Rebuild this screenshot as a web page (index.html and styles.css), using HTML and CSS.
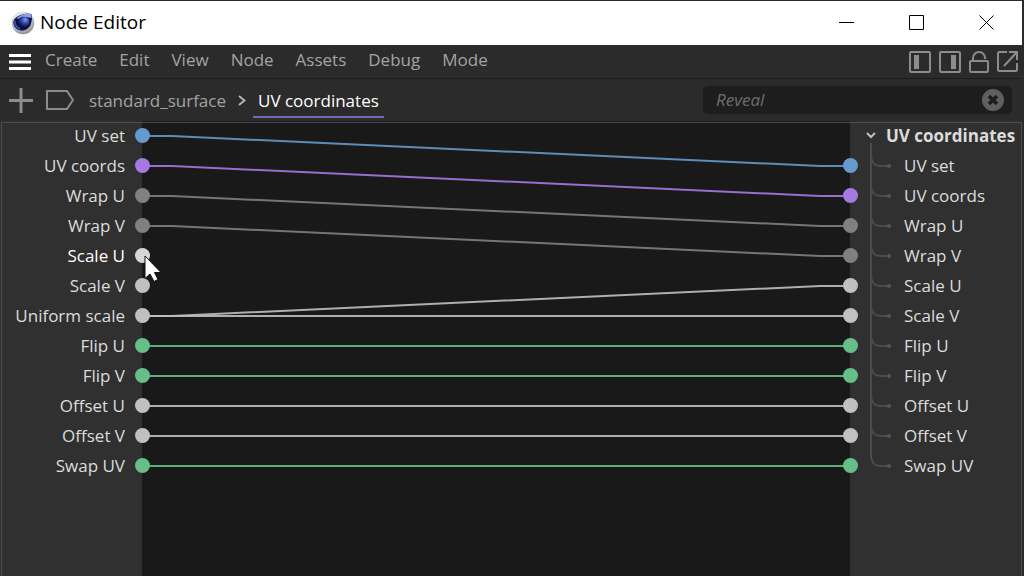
FILE: index.html
```html
<!DOCTYPE html>
<html lang="en">
<head>
<meta charset="utf-8">
<title>Node Editor</title>
<link rel="stylesheet" href="styles.css">
</head>
<body>
<div class="window">
  <header class="titlebar">
    <svg class="app-icon" width="24" height="24" viewBox="0 0 24 24" aria-hidden="true">
      <defs>
        <radialGradient id="rim" cx=".4" cy=".25" r=".8"><stop offset="0" stop-color="#f4f4f6"/><stop offset=".6" stop-color="#c6c6ca"/><stop offset="1" stop-color="#85858b"/></radialGradient>
        <radialGradient id="ball" cx=".65" cy=".3" r=".7"><stop offset="0" stop-color="#7f9aee"/><stop offset=".5" stop-color="#2c429e"/><stop offset="1" stop-color="#070a38"/></radialGradient>
      </defs>
      <circle cx="12" cy="12" r="11.300" fill="url(#rim)"/>
      <path d="M20.500 3C14 2 5 4 2.500 10c-1 4 2 8.500 7 9.500 5 .5 9.500-2.500 10.500-7 .8-3 1.500-6 .5-9.500z" fill="#0b1046"/>
      <path d="M20.500 3c-6-.8-11 .5-15 4.500l2 .5c3-2 7-2.500 10-1.500l3 .5z" fill="#8f9fe0"/>
      <ellipse cx="12.500" cy="11" rx="6" ry="5.500" fill="url(#ball)"/>
      <path d="M4 9.500c-.5 4 1.500 7 5 8.500" fill="none" stroke="#4058b8" stroke-width="1.500"/>
    </svg>
    <h1 class="title">Node Editor</h1>
    <div class="window-buttons">
      <button class="window-button" aria-label="Minimize"><svg width="16" height="16" viewBox="0 0 16 16"><path d="M0 7.500h15"/></svg></button>
      <button class="window-button" aria-label="Maximize"><svg width="16" height="16" viewBox="0 0 16 16"><path d="M.5 .5h14v14H.5z"/></svg></button>
      <button class="window-button" aria-label="Close"><svg width="16" height="16" viewBox="0 0 16 16"><path d="M.5 .5l14 14M14.500 .5l-14 14"/></svg></button>
    </div>
  </header>

  <nav class="menubar" aria-label="Main menu">
    <button class="icon-button menu-toggle" aria-label="Menu"><svg width="24" height="18" viewBox="0 0 24 18"><path d="M1 2.500h22M1 9h22M1 15.500h22" stroke="#fff" stroke-width="3"/></svg></button>
    <button class="menu">Create</button>
    <button class="menu">Edit</button>
    <button class="menu">View</button>
    <button class="menu">Node</button>
    <button class="menu">Assets</button>
    <button class="menu">Debug</button>
    <button class="menu">Mode</button>
    <div class="view-tools">
      <button class="icon-button" aria-label="Left panel"><svg width="22" height="22" viewBox="0 0 22 22"><rect x="1" y="1" width="20" height="20" rx="1"/><path class="solid" d="M5 4h5v14H5z"/></svg></button>
      <button class="icon-button" aria-label="Right panel"><svg width="22" height="22" viewBox="0 0 22 22"><rect x="1" y="1" width="20" height="20" rx="1"/><path class="solid" d="M12 4h5v14h-5z"/></svg></button>
      <button class="icon-button" aria-label="Lock"><svg width="20" height="22" viewBox="0 0 20 22"><rect x="1" y="10" width="18" height="11" rx="1"/><path d="M4 10V7a6 6 0 0 1 12 0v1"/></svg></button>
      <button class="icon-button" aria-label="Open in new window"><svg width="22" height="22" viewBox="0 0 22 22"><path d="M10 1H2L1 2v17l1 1h17l1-1v-7M7 15L20 1M12 1h8v8"/></svg></button>
    </div>
  </nav>

  <div class="toolbar">
    <button class="icon-button" aria-label="Add"><svg width="24" height="26" viewBox="0 0 24 26"><path d="M0 13.500h24M12 1v25" stroke-width="3"/></svg></button>
    <button class="icon-button" aria-label="Tag"><svg width="28" height="20" viewBox="0 0 28 20"><path d="M1 1h20l6 9-6 9H1z"/></svg></button>
    <nav class="breadcrumb" aria-label="Breadcrumb">
      <a class="crumb" href="#surface">standard_surface</a>
      <svg class="crumb-arrow" width="8" height="12" viewBox="0 0 8 12" aria-hidden="true"><path d="M1 2l5.500 4.500L1 11"/></svg>
      <a class="crumb current" href="#coordinates" aria-current="page">UV coordinates</a>
    </nav>
    <div class="search">
      <input class="search-input" type="text" placeholder="Reveal" aria-label="Reveal">
      <button class="icon-button" aria-label="Clear"><svg width="22" height="22" viewBox="0 0 22 22"><circle cx="11" cy="11" r="11" fill="#606060" stroke="none"/><path d="M7 7l8 8M15 7l-8 8" stroke="#1d1d1d" stroke-width="3.500"/></svg></button>
    </div>
  </div>

  <main class="graph">
    <ul class="ports inputs">
      <li class="port blue">UV set</li>
      <li class="port purple">UV coords</li>
      <li class="port gray">Wrap U</li>
      <li class="port gray">Wrap V</li>
      <li class="port light active">Scale U
        <svg class="cursor" width="18" height="28" viewBox="0 0 18 28" aria-hidden="true"><path d="M1 1v22.500l5-4.500 4 7.500 4-2-3.500-7H17z" fill="#fff" stroke="#111" stroke-width="1"/></svg>
      </li>
      <li class="port light">Scale V</li>
      <li class="port light">Uniform scale</li>
      <li class="port green">Flip U</li>
      <li class="port green">Flip V</li>
      <li class="port light">Offset U</li>
      <li class="port light">Offset V</li>
      <li class="port green">Swap UV</li>
    </ul>

    <svg class="wires" viewBox="0 0 708 360" preserveAspectRatio="none" role="img" aria-label="Connections">
      <path class="blue" d="M0 15H30L678 45H708"/>
      <path class="purple" d="M0 45H30L678 75H708"/>
      <path class="gray" d="M0 75H30L678 105H708"/>
      <path class="gray" d="M0 105H30L678 135H708"/>
      <path class="light" d="M0 195H30L678 165H708"/>
      <path class="light" d="M0 195H708"/>
      <path class="green" d="M0 225H708"/>
      <path class="green" d="M0 255H708"/>
      <path class="light" d="M0 285H708"/>
      <path class="light" d="M0 315H708"/>
      <path class="green" d="M0 345H708"/>
    </svg>

    <section class="outputs">
      <svg width="0" height="0" class="symbols" aria-hidden="true">
        <symbol id="branch" viewBox="0 0 22 30"><path d="M1 0v5q1 10 9 10h9"/><circle cx="19" cy="15" r="2"/></symbol>
      </svg>
      <button class="group"><svg width="10" height="8" viewBox="0 0 10 8" aria-hidden="true"><path d="M1 1l4 4 4-4"/></svg>UV coordinates</button>
      <ul class="ports tree">
        <li class="port blue"><svg class="branch"><use href="#branch"/></svg>UV set</li>
        <li class="port purple"><svg class="branch"><use href="#branch"/></svg>UV coords</li>
        <li class="port gray"><svg class="branch"><use href="#branch"/></svg>Wrap U</li>
        <li class="port gray"><svg class="branch"><use href="#branch"/></svg>Wrap V</li>
        <li class="port light"><svg class="branch"><use href="#branch"/></svg>Scale U</li>
        <li class="port light"><svg class="branch"><use href="#branch"/></svg>Scale V</li>
        <li class="port green"><svg class="branch"><use href="#branch"/></svg>Flip U</li>
        <li class="port green"><svg class="branch"><use href="#branch"/></svg>Flip V</li>
        <li class="port light"><svg class="branch"><use href="#branch"/></svg>Offset U</li>
        <li class="port light"><svg class="branch"><use href="#branch"/></svg>Offset V</li>
        <li class="port green"><svg class="branch"><use href="#branch"/></svg>Swap UV</li>
      </ul>
    </section>
  </main>
</div>
</body>
</html>
```
FILE: styles.css
```css
* { box-sizing: border-box; }

body {
  margin: 0;
  background: #2b2b2b;
  font-family: "Open Sans", "Noto Sans", sans-serif;
  font-size: 17px;
  line-height: 30px;
  color: #dcdcdc;
}

button, input { font: inherit; color: inherit; }

button {
  display: flex;
  align-items: center;
  padding: 0;
  border: 0;
  background: none;
}

svg { flex: none; fill: none; stroke: #8c8c8c; stroke-width: 2; }

.window {
  display: flex;
  flex-direction: column;
  min-height: 100vh;
  padding: 1px 2px 0 0;
}

.titlebar {
  display: flex;
  align-items: center;
  height: 44px;
  padding-left: 11px;
  gap: 5px;
  background: #fff;
  color: #000;
}

.app-icon { stroke: none; }
.title { margin: 0; padding-bottom: 2px; font-size: 19px; font-weight: 400; }
.window-buttons { display: flex; margin-left: auto; }
.window-button { justify-content: center; width: 70px; height: 44px; }
.window-button svg { stroke: #000; stroke-width: 1; }

.menubar {
  display: flex;
  align-items: center;
  gap: 22px;
  height: 34px;
  padding: 0 3px 0 8px;
  border-bottom: 1px solid #1d1d1d;
  color: #a3a3a3;
}

.menu-toggle { margin-right: -9px; }
.menu { padding-bottom: 3px; }
.view-tools { display: flex; gap: 8px; margin-left: auto; }
.solid { fill: #8c8c8c; stroke: none; }

.toolbar {
  display: flex;
  align-items: center;
  gap: 13px;
  height: 42px;
  padding: 0 10px 0 9px;
}

.breadcrumb { display: flex; align-items: center; gap: 7px; align-self: stretch; }
.crumb { padding: 4px 5px 0; color: #a3a3a3; text-decoration: none; border-bottom: 2px solid transparent; }
.crumb:first-child { padding-left: 2px; }
.current { color: #fff; border-color: #7068b8; }
.crumb-arrow { stroke: #b4b4b4; }

.search {
  display: flex;
  align-items: center;
  flex: 0 1 309px;
  height: 28px;
  margin-left: auto;
  padding: 0 8px 0 13px;
  border-radius: 5px;
  background: #1d1d1d;
}

.search-input { flex: 1; min-width: 0; padding: 0; border: 0; outline: 0; background: none; font-style: italic; }
.search-input::placeholder { color: #6e6e6e; opacity: 1; }

.graph {
  position: relative;
  display: grid;
  grid-template-columns: 142px 1fr 172px;
  flex: 1;
  background: #191919;
}

.graph::before {
  content: "";
  position: absolute;
  inset: 1px 0 0 1px;
  border: 1px solid #4b4b4b;
  border-bottom: 0;
  pointer-events: none;
}

.inputs, .outputs { background: #303030; }
.ports { margin: 0; padding: 0; list-style: none; }
.port { position: relative; height: 30px; }
.inputs .port { padding-right: 17px; text-align: right; }

.port::after {
  content: "";
  position: absolute;
  top: 7px;
  width: 15px;
  height: 15px;
  border-radius: 50%;
  background: var(--wire);
  z-index: 1;
}

.inputs .port::after { right: -8px; }
.tree .port::after { left: -7px; }

.blue { --wire: #6699cc; }
.purple { --wire: #a678e2; }
.gray { --wire: #808080; }
.light { --wire: #c0c0c0; }
.green { --wire: #66bf88; }
.active { --wire: #d6d6d6; color: #fff; }

.cursor { position: absolute; right: -20px; top: 14px; z-index: 2; }

.wires { width: 100%; height: 360px; }
.wires path { stroke: var(--wire); vector-effect: non-scaling-stroke; opacity: .9; }

.symbols { position: absolute; }
.group { gap: 10px; height: 30px; padding-left: 16px; font-weight: 700; white-space: nowrap; }
.group svg { stroke: #c0c0c0; }

.tree { position: relative; }
.tree::before {
  content: "";
  position: absolute;
  left: 20px;
  top: -8px;
  bottom: 25px;
  width: 2px;
  background: #4b4b4b;
}

.tree .port { display: flex; gap: 12px; padding-left: 20px; }
.branch { width: 22px; height: 30px; }
#branch path { stroke: #4b4b4b; }
#branch circle { fill: #555; stroke: none; }
```
